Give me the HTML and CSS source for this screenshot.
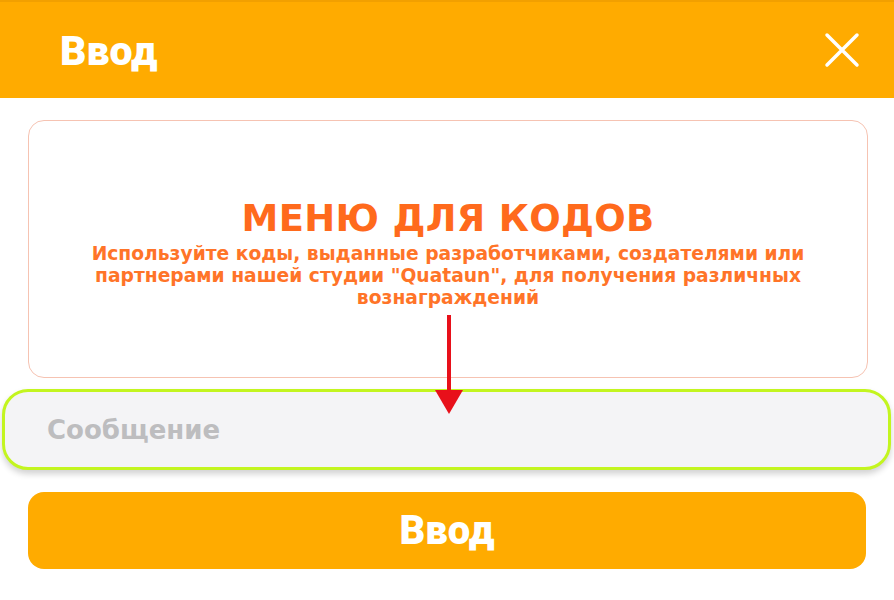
FILE: index.html
```html
<!DOCTYPE html>
<html lang="ru">
<head>
<meta charset="utf-8">
<title>Ввод</title>
<link rel="stylesheet" href="styles.css">
</head>
<body>
<div class="page">
  <header class="topbar">
    <h1 class="topbar-title">Ввод</h1>
    <button class="close" aria-label="Закрыть">
      <svg width="36" height="36" viewBox="0 0 36 36"><path d="M3 3 L33 33 M33 3 L3 33" stroke="#fff" stroke-width="3.5" stroke-linecap="round"/></svg>
    </button>
  </header>
  <main class="content">
    <section class="card">
      <h2 class="card-title">МЕНЮ ДЛЯ КОДОВ</h2>
      <p class="card-text">Используйте коды, выданные разработчиками, создателями или партнерами нашей студии "Quataun", для получения различных вознаграждений</p>
    </section>
    <div class="field">
      <input class="field-input" type="text" placeholder="Сообщение">
    </div>
    <button class="submit">Ввод</button>
    <svg class="arrow" width="32" height="100" viewBox="0 0 32 100"><rect x="14" y="0" width="4" height="76" fill="#e8101a"/><polygon points="2,75 30,75 16,99" fill="#e8101a"/></svg>
  </main>
</div>
</body>
</html>
```
FILE: styles.css
```css
* { box-sizing: border-box; }
html, body { margin: 0; padding: 0; background: #fff; }
body { font-family: "DejaVu Sans", "Noto Sans", sans-serif; }
.page { width: 894px; height: 600px; overflow: hidden; }
.topbar {
  height: 98px;
  background: #ffab00;
  border-top: 2px solid #f2a000;
  display: flex;
  align-items: center;
  justify-content: space-between;
  padding: 0 34px 0 60px;
}
.topbar-title {
  margin: 0;
  color: #fff;
  font-family: "Roboto", "Liberation Sans", sans-serif;
  font-weight: 900;
  font-size: 41px;
  letter-spacing: 0;
  line-height: 1;
  padding-top: 2px;
}
.close {
  background: none; border: 0; padding: 0; width: 36px; height: 36px;
  display: flex; align-items: center; justify-content: center;
}
.content {
  position: relative;
  padding: 22px 0 0 0;
}
.card {
  margin: 0 26px 0 28px;
  height: 258px;
  border: 1.5px solid #f6c3b2;
  border-radius: 16px;
  display: flex;
  flex-direction: column;
  align-items: center;
  justify-content: center;
  text-align: center;
  padding: 8px 20px 0;
}
.card-title {
  margin: 0 0 2px;
  color: #ff6a1c;
  font-weight: 800;
  font-size: 37px;
  line-height: 44px;
  letter-spacing: 0.3px;
}
.card-text {
  margin: 0;
  color: #ff7428;
  font-weight: 700;
  font-size: 18.7px;
  line-height: 22px;
  max-width: 760px;
}
.field {
  margin: 11px 3px 0 2px;
  height: 81px;
  border: 3px solid #c3f51f;
  border-radius: 26px;
  background: #f4f4f6;
  box-shadow: 0 4px 6px rgba(0,0,0,0.18);
  display: flex;
  align-items: center;
  padding: 0 0 0 42px;
}
.field-input {
  width: 100%;
  border: 0;
  background: transparent;
  outline: none;
  font-family: "DejaVu Sans", sans-serif;
  font-weight: 700;
  font-size: 26px;
  color: #333;
  padding: 0;
}
.field-input::placeholder { color: #bdbdbf; }
.submit {
  display: flex;
  align-items: center;
  justify-content: center;
  margin: 22px 28px 0 28px;
  width: 838px;
  height: 77px;
  border: 0;
  border-radius: 16px;
  background: #ffab00;
  color: #fff;
  font-family: "Roboto", "Liberation Sans", sans-serif;
  font-weight: 900;
  font-size: 40px;
  letter-spacing: 0;
  padding: 0;
}
.arrow {
  position: absolute;
  left: 433px;
  top: 217px;
}
```
